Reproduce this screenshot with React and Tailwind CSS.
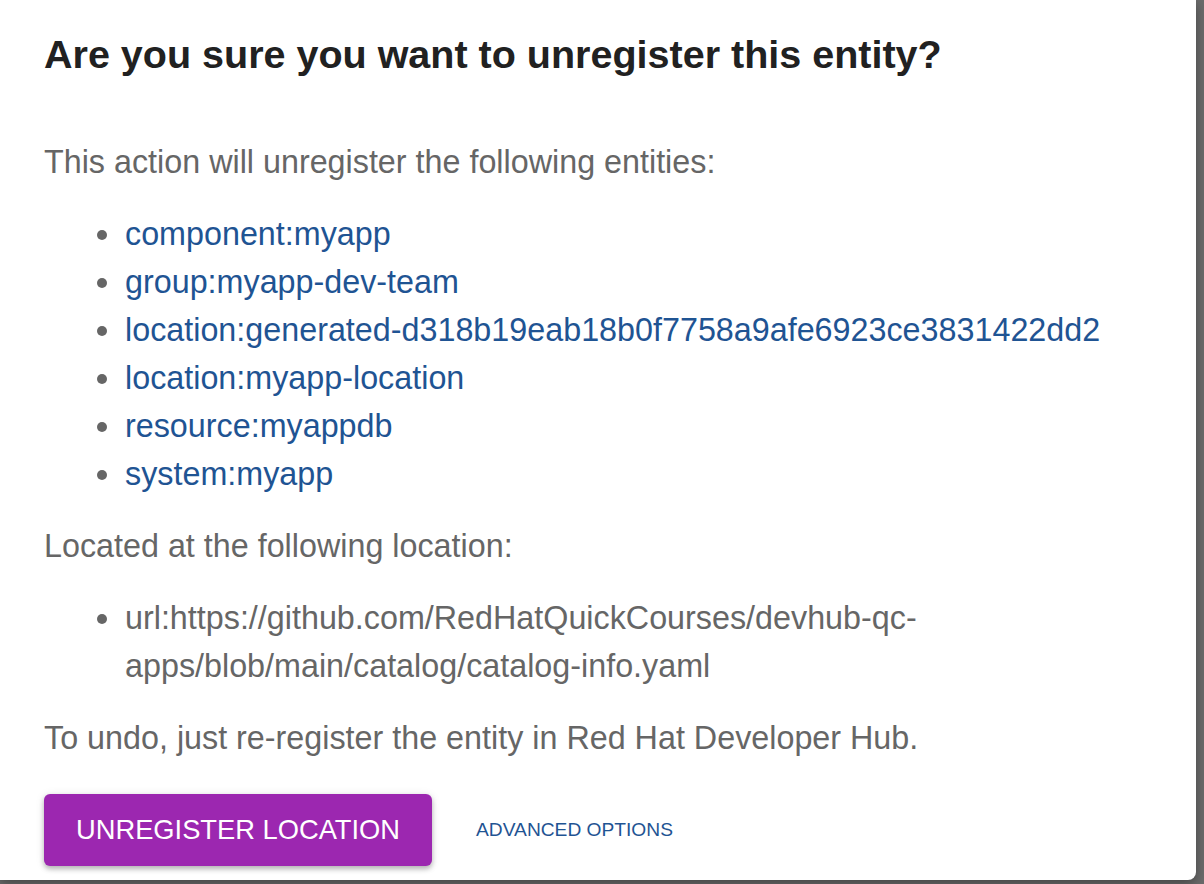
const entities = [
  "component:myapp",
  "group:myapp-dev-team",
  "location:generated-d318b19eab18b0f7758a9afe6923ce3831422dd2",
  "location:myapp-location",
  "resource:myappdb",
  "system:myapp",
];

function Bullet() {
  return <span className="mt-[20px] mr-[18px] h-[10px] w-[10px] shrink-0 rounded-full bg-[#666]" />;
}

export default function App() {
  return (
    <div className="h-[884px] w-[1204px] overflow-hidden bg-[#6b6b6b] font-['Liberation_Sans',Arial,sans-serif]">
      <div className="flex h-[880px] w-[1196px] flex-col rounded-br-[8px] bg-white pl-[44px] pt-[30px] shadow-[0_4px_12px_rgba(0,0,0,0.35)]">
        <h2 className="text-[39.5px] font-bold leading-[48px] text-[#212121]">
          Are you sure you want to unregister this entity?
        </h2>

        <div className="mt-[60px] text-[32.3px] leading-[48px] text-[#666]">
          <p>This action will unregister the following entities:</p>
          <ul className="my-[24px] pl-[53px]">
            {entities.map((e) => (
              <li key={e} className="flex">
                <Bullet />
                <span className="text-[#1f5493]">{e}</span>
              </li>
            ))}
          </ul>

          <p>Located at the following location:</p>
          <ul className="my-[24px] pl-[53px]">
            <li className="flex">
              <Bullet />
              <span className="max-w-[1000px]">
                url:https://github.com/RedHatQuickCourses/devhub-qc-apps/blob/main/catalog/catalog-info.yaml
              </span>
            </li>
          </ul>

          <p>To undo, just re-register the entity in Red Hat Developer Hub.</p>
        </div>

        <div className="mt-[32px] flex items-center">
          <button className="h-[72px] rounded-[6px] bg-[#9c27b0] px-[32px] text-[27.3px] uppercase text-white shadow-[0_3px_5px_rgba(0,0,0,0.25),0_1px_10px_rgba(0,0,0,0.1)]">
            Unregister Location
          </button>
          <button className="ml-[44px] text-[19.2px] uppercase text-[#1f5493]">
            Advanced Options
          </button>
        </div>
      </div>
    </div>
  );
}
